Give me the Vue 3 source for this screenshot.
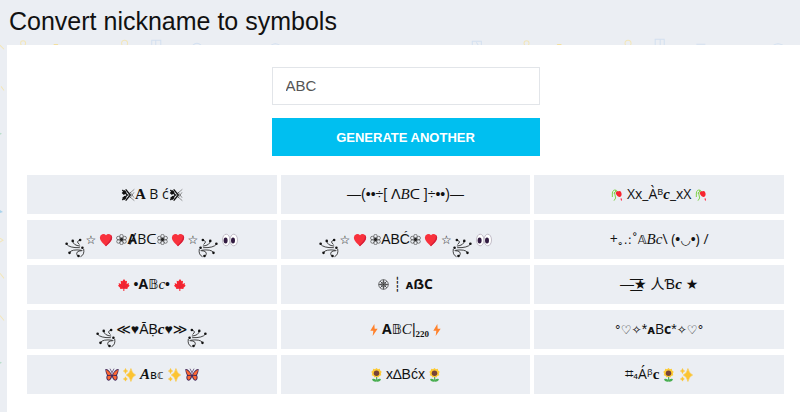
<template>
  <div class="page">
    <svg class="doodles" viewBox="0 0 800 412" preserveAspectRatio="xMinYMin slice" aria-hidden="true">
      <g fill="none" stroke-width="1">
        <g stroke="#f3e6b8">
          <circle cx="23" cy="43" r="2.5" />
          <circle cx="124" cy="43" r="3" />
          <circle cx="524" cy="43" r="2.5" />
          <circle cx="625" cy="43" r="3" />
          <path d="M0 45l4 4M1 86l3 4M0 237l3 2-3 2M0 272l4 5M0 314l4 5" />
        </g>
        <g stroke="#d3e0f0">
          <path d="M151 45v-5h9v5M155 40v5M470 46v-5h9v5M474 42l2 3M652 45v-6h9v6M657 39v6" />
          <path d="M192 45q4-4 8 0M270 45q4-3 8 0M693 44h9M770 45q4-3 9 0" />
        </g>
      </g>
      <path d="M53 44h5l-2 3zM554 44h5l-2 3z" fill="#f5da83" />
      <path d="M0 132l2 1-2 1zM0 360l2 1-2 1z" fill="#b7dfc9" />
      <path d="M0 209l3 2-3 1z" fill="#a9d3ec" />
    </svg>

    <h1>Convert nickname to symbols</h1>

    <main class="panel">
      <form class="form" @submit.prevent>
        <input v-model="nickname" type="text" aria-label="Nickname" />
        <button type="submit">GENERATE ANOTHER</button>
      </form>

      <ul class="results">
        <li v-for="(runs, index) in results" :key="index">
          <template v-for="(run, n) in runs" :key="n">
            <svg v-if="run[0] === 'icon'" class="icon" :class="run[1]" aria-hidden="true">
              <use :href="`#${run[1].split(' ')[0]}`" />
            </svg>
            <span v-else :class="run[0]">{{ run[1] }}</span>
          </template>
        </li>
      </ul>
    </main>

    <svg class="sprite" aria-hidden="true">
      <symbol id="curl" viewBox="0 0 60 62">
        <g fill="none" stroke="#222" stroke-width="2.6">
          <path d="M4 19Q12 31 45 30M23 9Q24 23 46 25M46 6Q31 11 44 20M13 45Q20 34 50 38M38 56Q28 40 53 39M57 34Q60 52 47 58" />
        </g>
        <g fill="#111">
          <circle cx="4" cy="18" r="4" /><circle cx="23" cy="9" r="4" /><circle cx="46" cy="6" r="4" />
          <circle cx="53" cy="30" r="4" /><circle cx="13" cy="46" r="4" /><circle cx="41" cy="56" r="4" />
        </g>
      </symbol>
      <symbol id="heart" viewBox="0 0 16 16">
        <path d="M8 15C5 12 1 9 1 5a4 4 0 0 1 7-2.500A4 4 0 0 1 15 5c0 4-4 7-7 10z" fill="#f8313c" />
        <path d="M13 2c2 3-1 8-6 12l1 1c3-3 7-6 7-10 0-1-.8-2.500-2-3z" fill="#d51f3a" />
      </symbol>
      <symbol id="eyes" viewBox="0 0 16 14">
        <g fill="#fff" stroke="#b5adba" stroke-width=".8">
          <ellipse cx="4.200" cy="7" rx="3.700" ry="5.800" /><ellipse cx="11.800" cy="7" rx="3.700" ry="5.800" />
        </g>
        <g fill="#321b41"><ellipse cx="3.600" cy="7.500" rx="2" ry="3" /><ellipse cx="11" cy="7.500" rx="2" ry="3" /></g>
      </symbol>
      <symbol id="flower" viewBox="0 0 12 12">
        <g fill="none" stroke="#444" stroke-width=".7">
          <circle cx="6" cy="2.300" r="1.900" /><circle cx="9.500" cy="4.400" r="1.900" /><circle cx="9.300" cy="8.200" r="1.900" />
          <circle cx="6" cy="9.700" r="1.900" /><circle cx="2.700" cy="8.200" r="1.900" /><circle cx="2.500" cy="4.400" r="1.900" />
        </g>
        <circle cx="6" cy="6" r="1.800" fill="#222" />
      </symbol>
      <symbol id="wedge" viewBox="0 0 42 42">
        <path d="M4 6l15 15L4 36M14 4l14 17-14 17" fill="none" stroke="#111" stroke-width="4" />
        <path d="M2 15l9-9 6 7-8 8zM3 30l8-7 6 7-7 6z" fill="#111" />
        <path d="M20 21L40 4M20 21l20 17M27 12l12 17M27 30l12-17" fill="none" stroke="#333" stroke-width="1.500" />
      </symbol>
      <symbol id="rose" viewBox="0 0 36 42">
        <path d="M4 27V15Q6 3 16 7L9 17M12 8q9 0 10 8M10 12l4 18-5 8" fill="none" stroke="#80d34c" stroke-width="3" />
        <path d="M14 16q1-8 9-6 6-3 8 4 3 8-4 13-9 0-13-11z" fill="#f8252f" />
        <path d="M29 30l4 2v7l-4-3z" fill="#ff405a" />
      </symbol>
      <symbol id="maple" viewBox="0 0 36 38">
        <path d="M18 1l5 7 4-2-1 10 7-3-1 5 3 3-7 7 1 3-10-1v7h-3v-7L6 31l1-3-7-7 3-3-1-5 7 3L8 6l5 2z" fill="#f8252f" />
        <path d="M18 9v21M8 19l10 9 10-9" stroke="#cf2443" stroke-width="1.500" fill="none" />
      </symbol>
      <symbol id="bolt" viewBox="0 0 24 38">
        <path d="M13 1L1 21h9L8 37l15-22h-9z" fill="#ff822d" />
      </symbol>
      <symbol id="butterfly" viewBox="0 0 42 40">
        <path d="M20 19C15 7 7 1 1 2c0 9 3 14 5 19-4 7-1 16 5 16 5 0 9-7 10-13 1 6 5 13 10 13 6 0 9-9 5-16 2-5 5-10 5-19C35 1 27 7 22 19z" fill="#44285a" />
        <path d="M18 19C14 10 8 6 3 4c1 7 3 12 6 16zM24 19c4-9 10-13 15-15-1 7-3 12-6 16zM8 23l10-1c-1 8-4 12-8 12-3-2-4-7-2-11zM34 23l-10-1c1 8 4 12 8 12 3-2 4-7 2-11z" fill="#ff6831" />
        <path d="M21 13v17M21 13l-6-12M21 13l6-12" stroke="#44285a" stroke-width="2" fill="none" />
      </symbol>
      <symbol id="sparkles" viewBox="0 0 36 38">
        <path d="M22 1q3 14 13 18-10 4-13 18-3-14-13-18Q19 15 22 1zM7 1q1 6 6 7-5 1-6 7-1-6-6-7 5-1 6-7zM7 24q1 5 5 6-4 1-5 6-1-5-6-6 5-1 6-6z" fill="#fcc432" stroke="#fcc432" stroke-width="1.500" />
      </symbol>
      <symbol id="sunflower" viewBox="0 0 30 38">
        <path d="M14 23h3v12h-3z" fill="#46a54d" />
        <path d="M15 37Q4 38 3 30q9-2 12 4 3-6 12-4-1 8-12 7z" fill="#48ae50" />
        <path d="M15 0l4 3 5-1 1 5 4 3-2 5 1 5-5 2-3 4-5-2-5 2-3-4-5-2 1-5-2-5 4-3 1-5 5 1z" fill="#fdcb36" />
        <circle cx="15" cy="14" r="7.500" fill="#764439" />
      </symbol>
      <symbol id="wheel" viewBox="0 0 30 30">
        <g fill="none" stroke="#333" stroke-width="2">
          <circle cx="15" cy="15" r="13" /><circle cx="15" cy="15" r="7" />
          <path d="M15 2v26M2 15h26M6 6l18 18M24 6L6 24" />
        </g>
      </symbol>
    </svg>
  </div>
</template>

<script setup>
import { ref } from 'vue'

const nickname = ref('ABC')

// each result is a list of runs: [style, text] or ['icon', symbol]
const results = [
  [['icon', 'wedge'], ['serif bold', 'A'], ['humanist', ' B ć'], ['icon', 'wedge']],
  [['sans', '—(••÷[ '], ['dejavu', 'Λ'], ['serif italic', 'B'], ['dejavu', 'ᑕ'], ['sans', ' ]÷••)—']],
  [['icon', 'rose'], ['humanist', ' Xx_Àᴮ'], ['serif bold italic', 'c'], ['humanist', '_xX '], ['icon', 'rose']],
  [
    ['icon', 'curl'], ['small', '☆'], ['icon', 'heart'], ['icon', 'flower'], ['sans bold', 'Ⱥ'], ['humanist', 'B'], ['dejavu', 'ᑕ'],
    ['icon', 'flower'], ['icon', 'heart'], ['small', '☆'], ['icon', 'curl flip'], ['sans', ' '], ['icon', 'eyes'],
  ],
  [
    ['icon', 'curl'], ['small', '☆'], ['icon', 'heart'], ['icon', 'flower'], ['sans', 'ABĆ'],
    ['icon', 'flower'], ['icon', 'heart'], ['small', '☆'], ['icon', 'curl flip'], ['sans', ' '], ['icon', 'eyes'],
  ],
  [['humanist', '+'], ['small', '｡.:˚𝔸'], ['serif italic', 'Bc'], ['humanist', '\\ ('], ['sans', '•'], ['small', '◡'], ['sans', '•'], ['humanist', ') /']],
  [['icon', 'maple'], ['sans', ' •'], ['humanist bold', 'A'], ['dejavu', '𝔹'], ['serif italic', 'c'], ['sans', '• '], ['icon', 'maple']],
  [['icon', 'wheel'], ['sans', ' ┊ '], ['small bold', 'ᴀ'], ['humanist bold', 'ẞC']],
  [['sans', '—͟͞★ 人Ɓ'], ['serif bold italic', 'c'], ['sans', ' ★']],
  [['icon', 'curl'], ['dejavu', '≪'], ['sans', '♥ĀḄ'], ['serif bold italic', 'c'], ['sans', '♥'], ['dejavu', '≫'], ['icon', 'curl flip']],
  [['icon', 'bolt'], ['sans', ' '], ['humanist bold', 'A'], ['dejavu', '𝔹'], ['serif italic', 'C'], ['sans', '|'], ['serif bold', '₂₂₀'], ['sans', ' '], ['icon', 'bolt']],
  [['small', '°♡✧'], ['sans', '*'], ['small bold', 'ᴀ'], ['humanist', 'B'], ['humanist bold', 'c'], ['sans', '*'], ['small', '✧♡°']],
  [['icon', 'butterfly'], ['icon', 'sparkles'], ['serif bold italic', 'A'], ['small', 'ʙ𝕔'], ['icon', 'sparkles'], ['icon', 'butterfly']],
  [['icon', 'sunflower'], ['sans', ' x∆Bćx '], ['icon', 'sunflower']],
  [['large', '⌗'], ['small', '₄'], ['humanist', 'Áᵝ'], ['serif bold', 'c'], ['sans', ' '], ['icon', 'sunflower'], ['sans', ' '], ['icon', 'sparkles last']],
]
</script>

<style>
body {
  background: #ebeef3;
}
</style>

<style scoped>
.page {
  position: relative;
  display: flex;
  flex-direction: column;
  min-height: 100vh;
  padding-left: 7px;
  box-sizing: border-box;
  font-family: "Liberation Sans", "DejaVu Sans", "Noto Sans CJK SC", sans-serif;
  color: #111;
  overflow: hidden;
}

.doodles {
  position: absolute;
  inset: 0;
  width: 100%;
  height: 100%;
}

h1 {
  position: relative;
  margin: 0;
  padding: 6px 2px 9px;
  font-size: 25px;
  line-height: 30px;
  font-weight: 400;
}

.panel {
  position: relative;
  flex: 1;
  padding: 22px 16px 20px 20px;
  background: #fff;
}

.form {
  display: flex;
  flex-direction: column;
  gap: 13px;
  max-width: 268px;
  margin: 0 auto 19px;
}

input,
button {
  height: 38px;
  box-sizing: border-box;
  font-family: inherit;
  border-radius: 0;
}

input {
  padding: 0 13px 2px;
  border: 1px solid #e2e5e9;
  background: #fff;
  color: #555;
  font-size: 15px;
}

button {
  border: 0;
  background: #00bff0;
  color: #fff;
  font-size: 13px;
  font-weight: 700;
  cursor: pointer;
}

.results {
  display: grid;
  grid-template-columns: repeat(3, 1fr);
  gap: 6px 4px;
  margin: 0;
  padding: 0;
  list-style: none;
}

.results li {
  height: 39px;
  background: #ebeef3;
  font-size: 14px;
  line-height: 39px;
  text-align: center;
  white-space: pre;
}

.results span {
  line-height: 20px;
}

.serif {
  font-family: "Liberation Serif", "DejaVu Serif", serif;
  font-size: 15px;
}

.humanist {
  font-family: "Open Sans", "Noto Sans", "DejaVu Sans", sans-serif;
}

.dejavu,
.small,
.large {
  font-family: "DejaVu Sans", sans-serif;
}

.small {
  font-size: 12px;
}

.large {
  font-size: 15px;
}

.bold {
  font-weight: 700;
}

.italic {
  font-style: italic;
}

.sprite {
  position: absolute;
  width: 0;
  height: 0;
}

.icon {
  width: 14px;
  height: 14px;
  vertical-align: -3px;
}

.curl {
  width: 20px;
  height: 20px;
  vertical-align: -14px;
}

.flip {
  transform: scaleX(-1);
}

.heart {
  margin: 0 3px;
}

.eyes {
  width: 16px;
}

.flower,
.wheel {
  width: 11px;
  height: 11px;
  vertical-align: -1px;
}

.bolt {
  width: 8px;
}

.rose,
.maple {
  width: 12px;
}

.sunflower {
  width: 11px;
}

.sparkles {
  width: 13px;
  margin: 0 4px;
}

.last {
  margin: 0 0 0 2px;
}
</style>
